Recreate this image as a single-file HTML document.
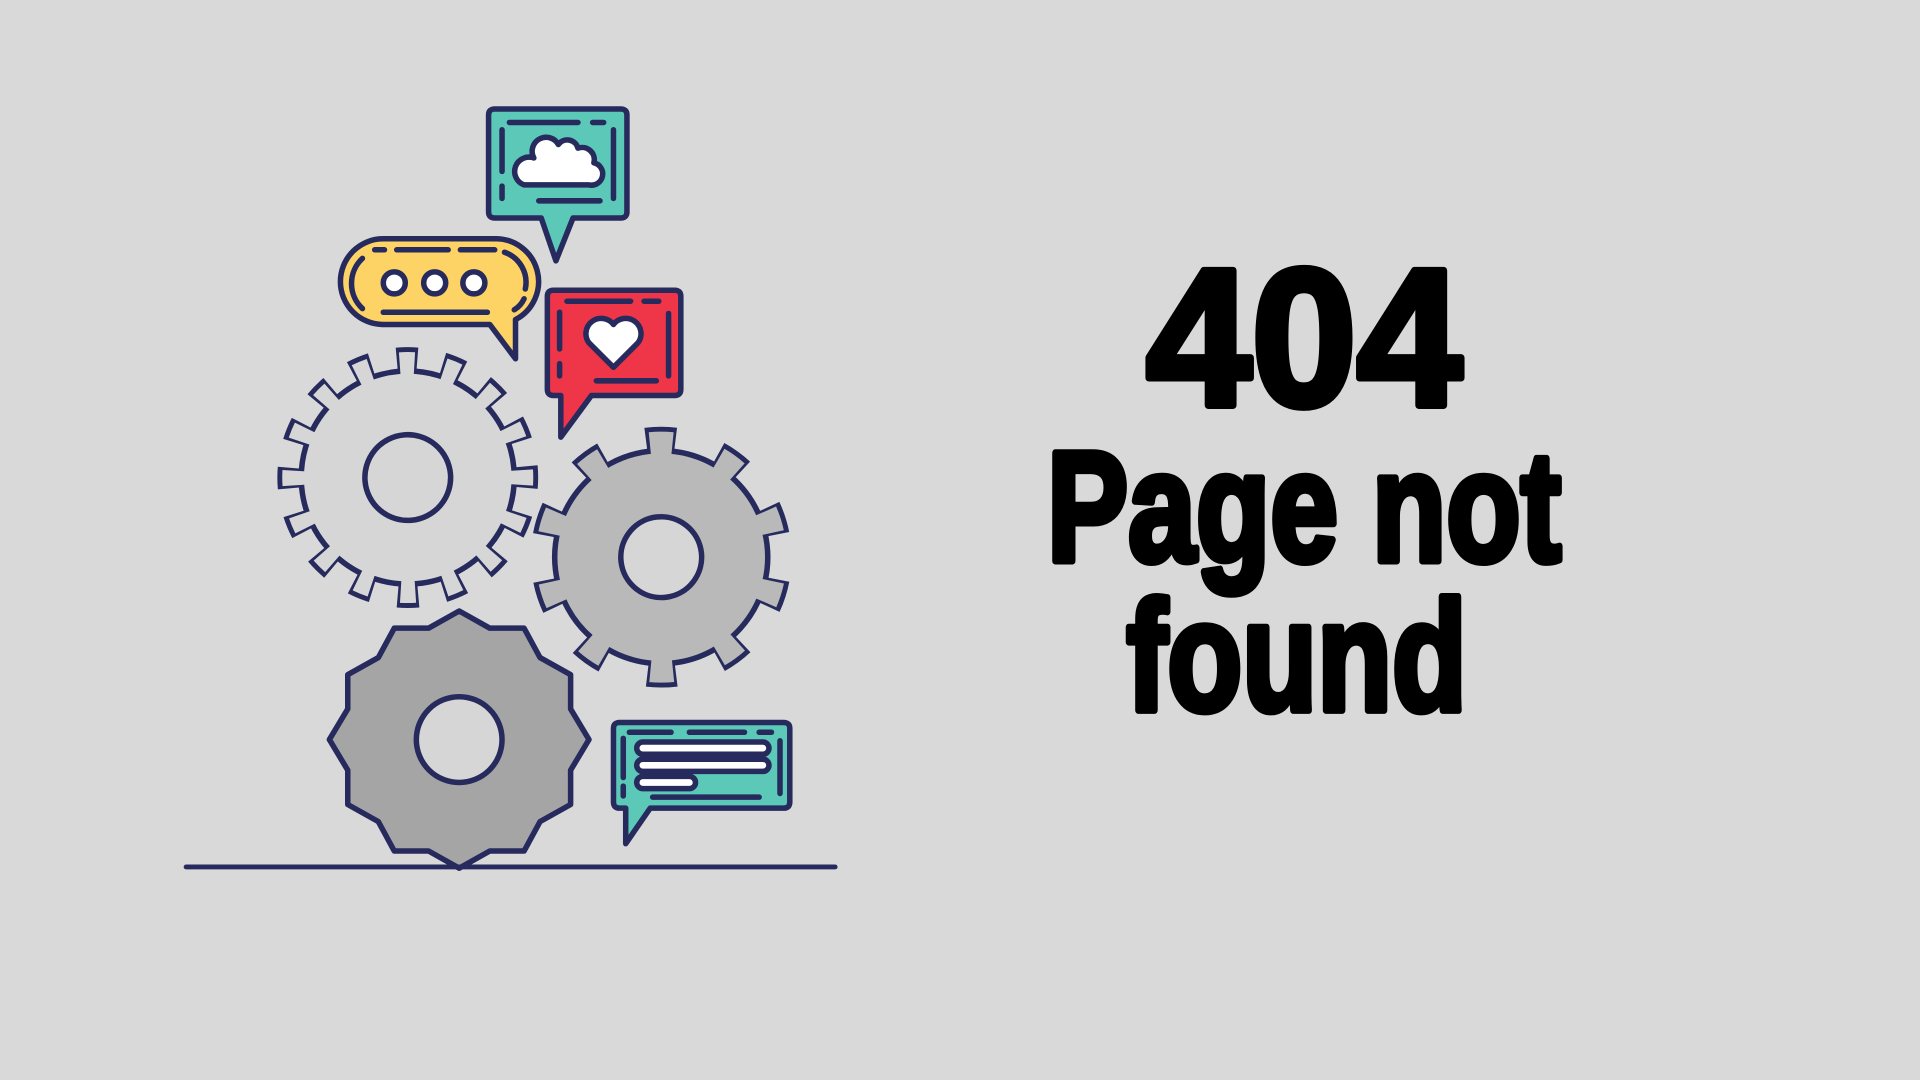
<!DOCTYPE html>
<html><head><meta charset="utf-8"><style>
html,body{margin:0;padding:0;background:#d9d9d9;width:1920px;height:1080px;overflow:hidden}
svg{display:block}
</style></head><body>
<svg width="1920" height="1080" viewBox="0 0 1568 882" xmlns="http://www.w3.org/2000/svg">
<rect width="1568" height="882" fill="#d9d9d9"/>
<g stroke="#262a5c" stroke-linejoin="round" stroke-linecap="round">
<!-- gear 1 -->
<g transform="translate(333,390) rotate(-5)">
<circle r="96" fill="none" stroke-width="21" pathLength="360" stroke-dasharray="10 12.5" stroke-linecap="butt"/>
<circle r="87" fill="#d6d6d6" stroke-width="4.5"/>
<circle r="93" fill="none" stroke="#d6d6d6" stroke-width="19" pathLength="360" stroke-dasharray="7.4 15.1" stroke-dashoffset="-1.3" stroke-linecap="butt"/>
<circle r="35" fill="#d6d6d6" stroke-width="4.5"/>
</g>
<!-- gear 2 -->
<g transform="translate(540,455) rotate(-97)">
<circle r="96" fill="none" stroke-width="21" pathLength="360" stroke-dasharray="14 22" stroke-linecap="butt"/>
<circle r="87" fill="#b9b9b9" stroke-width="4.5"/>
<circle r="93" fill="none" stroke="#b9b9b9" stroke-width="19" pathLength="360" stroke-dasharray="11.4 24.6" stroke-dashoffset="-1.3" stroke-linecap="butt"/>
<circle r="33" fill="#d6d6d6" stroke-width="4.5"/>
</g>
<!-- gear 3 -->
<polygon fill="#a6a5a5" stroke-width="4.5" points="375,499 400,513 428,513 441,537 466,551 466,579 481,604 466,629 466,657 441,671 428,695 400,695 375,709 350,695 322,695 309,671 284,657 284,629 269,604 284,579 284,551 309,537 322,513 350,513"/>
<circle cx="375" cy="604" r="35" fill="#d6d6d6" stroke-width="4.5"/>
<!-- ground -->
<line x1="152" y1="708" x2="682" y2="708" stroke-width="4"/>

<!-- teal top bubble -->
<path d="M404,89 H507 Q512,89 512,94 V173 Q512,178 507,178 H468 L454,213 L442,178 H404 Q399,178 399,173 V94 Q399,89 404,89 Z" fill="#5bc8b8" stroke-width="4.5"/>
<g stroke-width="4.5" fill="none">
<path d="M416,100 H472 M484,100 H493 M410,106 V140 M410,152 V162 M501,106 V162 M440,164 H490"/>
</g>
<path d="M428,151 H481 A9,9 0 0 0 485,133 A10,10 0 0 0 472,121 A9,9 0 0 0 456,118 A11,11 0 0 0 436,129 A8,8 0 0 0 428,151 Z" fill="#fff" stroke-width="4.5"/>

<!-- yellow bubble -->
<path d="M313,195 H403 A35,35 0 0 1 421,261 V293 L400,265 H313 A35,35 0 0 1 313,195 Z" fill="#fdd365" stroke-width="4.5"/>
<g stroke-width="4.5" fill="none">
<path d="M306,204 H314 M324,204 H366 M376,204 H404 M313,255 H398"/>
<path d="M296,211 A28,28 0 0 0 296,252"/>
<path d="M412,206 A26,26 0 0 1 429,236 M428,244 A20,20 0 0 1 420,253"/>
</g>
<circle cx="322" cy="231" r="9" fill="#fff" stroke-width="4.5"/>
<circle cx="355" cy="231" r="9" fill="#fff" stroke-width="4.5"/>
<circle cx="387" cy="231" r="9" fill="#fff" stroke-width="4.5"/>

<!-- red bubble -->
<path d="M452,237 H551 Q556,237 556,242 V318 Q556,323 551,323 H483 L458,357 V323 H452 Q447,323 447,318 V242 Q447,237 452,237 Z" fill="#ef3649" stroke-width="4.5"/>
<g stroke-width="4.5" fill="none">
<path d="M463,246 H515 M526,246 H538 M457,255 V285 M457,297 V307 M546,256 V307 M487,311 H536"/>
</g>
<path d="M501,300 L481,280 A12,12 0 0 1 501,265 A12,12 0 0 1 521,280 Z" fill="#fff" stroke-width="4.5"/>

<!-- teal bottom bubble -->
<path d="M506,590 H640 Q645,590 645,595 V655 Q645,660 640,660 H531 L511,689 V660 H506 Q501,660 501,655 V595 Q501,590 506,590 Z" fill="#5bc8b8" stroke-width="4.5"/>
<g stroke-width="4.5" fill="none">
<path d="M514,598 H548 M563,598 H608 M620,598 H630 M509,603 V635 M509,642 V650 M637,605 V648 M533,651 H620"/>
</g>
<rect x="520" y="606" width="108" height="10" rx="5" fill="#fff" stroke-width="4.5"/>
<rect x="520" y="620" width="108" height="10" rx="5" fill="#fff" stroke-width="4.5"/>
<rect x="520" y="634" width="48" height="10" rx="5" fill="#fff" stroke-width="4.5"/>
</g>

<!-- text -->
<g font-family="'Liberation Sans', sans-serif" font-weight="bold" fill="#000" stroke="#000" stroke-width="6" stroke-linejoin="round" text-anchor="middle">
<text x="1065" y="331" font-size="160" textLength="258" lengthAdjust="spacingAndGlyphs">404</text>
<text x="1065" y="458" font-size="128" textLength="420" lengthAdjust="spacingAndGlyphs">Page not</text>
<text x="1059" y="580" font-size="128" textLength="278" lengthAdjust="spacingAndGlyphs">found</text>
</g>
</svg>
</body></html>
